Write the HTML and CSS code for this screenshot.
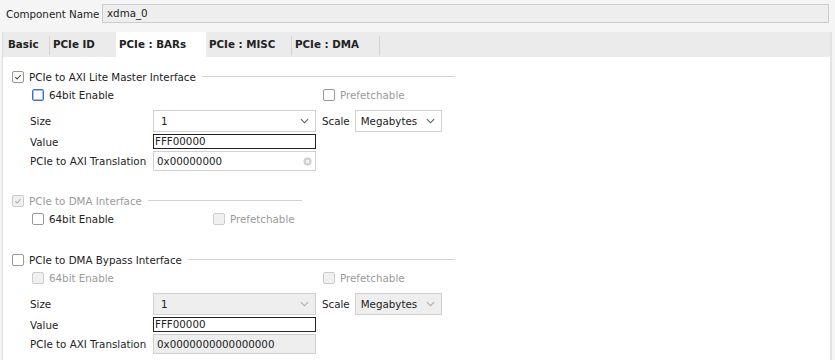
FILE: index.html
```html
<!DOCTYPE html>
<html lang="en">
<head>
    <meta charset="utf-8">
    <title>xdma_0</title>
    <link rel="stylesheet" href="styles.css">
</head>

<body>
    <header class="top">
        <span class="name-label">Component Name</span>
        <div class="name-input">xdma_0</div>
    </header>

    <div class="panel">
        <nav class="tabs">
            <div class="tab tab-basic">Basic</div>
            <div class="tab tab-id">PCIe ID</div>
            <div class="tab tab-bars valgt">PCIe : BARs</div>
            <div class="tab tab-misc">PCIe : MISC</div>
            <div class="tab tab-dma">PCIe : DMA</div>
        </nav>

        <main class="page">
            <!-- AXI lite master -->
            <section class="group group-wide">
                <div class="group-head">
                    <span class="check">
                        <svg viewBox="0 0 12 12"><path d="M2.8 6.2 L5 8.4 L9.3 3.6" /></svg>
                    </span>
                    <span class="group-title">PCIe to AXI Lite Master Interface</span>
                    <span class="rule"></span>
                </div>
                <div class="opts">
                    <div class="opt"><span class="check focus"></span>64bit Enable</div>
                    <div class="opt off"><span class="check"></span>Prefetchable</div>
                </div>
                <div class="form">
                    <span class="lbl">Size</span>
                    <div class="select">1<svg class="chev" viewBox="0 0 10 6"><path d="M1 1 L5 5 L9 1" /></svg></div>
                    <span class="lbl scale-lbl">Scale</span>
                    <div class="select scale">Megabytes<svg class="chev" viewBox="0 0 10 6"><path d="M1 1 L5 5 L9 1" /></svg></div>

                    <span class="lbl">Value</span>
                    <div class="value">FFF00000</div>
                    <span></span><span></span>

                    <span class="lbl">PCIe to AXI Translation</span>
                    <div class="text">0x00000000
                        <svg class="clear" viewBox="0 0 10 10">
                            <circle cx="5" cy="5" r="4.5" />
                            <path d="M3.3 3.3 L6.7 6.7 M6.7 3.3 L3.3 6.7" />
                        </svg>
                    </div>
                </div>
            </section>

            <!-- DMA -->
            <section class="group group-narrow">
                <div class="group-head off">
                    <span class="check dis">
                        <svg viewBox="0 0 12 12"><path d="M2.8 6.2 L5 8.4 L9.3 3.6" /></svg>
                    </span>
                    <span class="group-title">PCIe to DMA Interface</span>
                    <span class="rule"></span>
                </div>
                <div class="opts">
                    <div class="opt"><span class="check"></span>64bit Enable</div>
                    <div class="opt off"><span class="check dis"></span>Prefetchable</div>
                </div>
            </section>

            <!-- DMA bypass -->
            <section class="group group-wide bypass">
                <div class="group-head">
                    <span class="check"></span>
                    <span class="group-title">PCIe to DMA Bypass Interface</span>
                    <span class="rule"></span>
                </div>
                <div class="opts">
                    <div class="opt off"><span class="check dis"></span>64bit Enable</div>
                    <div class="opt off"><span class="check dis"></span>Prefetchable</div>
                </div>
                <div class="form">
                    <span class="lbl">Size</span>
                    <div class="select dis">1<svg class="chev" viewBox="0 0 10 6"><path d="M1 1 L5 5 L9 1" /></svg></div>
                    <span class="lbl scale-lbl">Scale</span>
                    <div class="select scale dis">Megabytes<svg class="chev" viewBox="0 0 10 6"><path d="M1 1 L5 5 L9 1" /></svg></div>

                    <span class="lbl">Value</span>
                    <div class="value">FFF00000</div>
                    <span></span><span></span>

                    <span class="lbl">PCIe to AXI Translation</span>
                    <div class="text dis">0x0000000000000000</div>
                </div>
            </section>
        </main>
    </div>
</body>
</html>
```

FILE: styles.css
```css
* {
    box-sizing: border-box;
}

body {
    margin: 0;
    height: 360px;
    overflow: hidden;
    background-color: #f5f5f5;
    font-family: "DejaVu Sans", sans-serif;
    font-size: 10.3px;
    color: #222;
}

.top {
    display: flex;
    align-items: center;
    height: 32px;
    padding: 0 6px 5px 6px;
}

.name-label {
    width: 96px;
}

.name-input {
    width: 727px;
    height: 19px;
    line-height: 17px;
    padding-left: 4px;
    background-color: #eeeeee;
    border: 1px solid #cccccc;
}

.panel {
    margin-left: 2px;
    width: 830px;
    height: 328px;
    border-left: 1px solid #dddddd;
    border-right: 2px solid #e3e3e3;
}

.tabs {
    display: flex;
    height: 25px;
    background-color: #ebebeb;
}

.tab {
    height: 25px;
    line-height: 25px;
    padding-left: 3px;
    font-weight: bold;
    background: linear-gradient(#d4d4d4, #d4d4d4) right 4px / 1px 19px no-repeat;
}

.tab-basic {
    width: 47px;
    padding-left: 5px;
}

.tab-id {
    width: 66px;
    background: none;
}

.tab-bars {
    width: 90px;
}

.tab-misc {
    width: 86px;
}

.tab-dma {
    width: 88px;
}

.valgt {
    background: #ffffff;
}

.page {
    height: 303px;
    padding: 10px 0 0 9px;
    background-color: #ffffff;
}

.group-wide {
    width: 443px;
}

.group-narrow {
    width: 290px;
    margin-top: 20px;
}

.bypass {
    margin-top: 22px;
}

.group-head {
    display: flex;
    align-items: center;
    height: 19px;
}

.group-title {
    margin-left: 5px;
}

.rule {
    flex: 1;
    height: 1px;
    margin-left: 6px;
    background-color: #d2d2d2;
}

.off {
    color: #9a9a9a;
}

.check {
    display: inline-block;
    flex: none;
    width: 12px;
    height: 12px;
    border: 1px solid #999999;
    border-radius: 2px;
    background-color: #ffffff;
}

.check svg {
    display: block;
    width: 10px;
    height: 10px;
    fill: none;
    stroke: #444444;
    stroke-width: 1.3;
}

.check.dis {
    border-color: #cccccc;
    background-color: #f0f0f0;
}

.check.dis svg {
    stroke: #aaaaaa;
}

.check.focus {
    border-color: #3d6fd1;
    box-shadow: inset 0 0 0 1px rgba(61, 111, 209, 0.45);
}

.opts {
    display: grid;
    grid-template-columns: 291px auto;
    height: 18px;
    padding-left: 20px;
    align-items: center;
}

.group-narrow .opts {
    grid-template-columns: 181px auto;
}

.opt {
    display: flex;
    align-items: center;
    gap: 5px;
}

.form {
    display: grid;
    grid-template-columns: 123px 163px max-content max-content;
    grid-template-rows: 22px 15px 20px;
    justify-content: start;
    row-gap: 2px;
    align-items: center;
    margin-top: 6px;
    padding-left: 18px;
}

.scale-lbl {
    margin: 0 5px 0 6px;
}

.select {
    display: flex;
    align-items: center;
    justify-content: space-between;
    height: 22px;
    padding: 0 6px 0 7px;
    background-color: #ffffff;
    border: 1px solid #d0d0d0;
}

.scale {
    width: 87px;
    padding-left: 5px;
}

.chev {
    width: 9px;
    height: 6px;
    fill: none;
    stroke: #555555;
    stroke-width: 1.2;
}

.select.dis {
    background-color: #eeeeee;
}

.select.dis .chev {
    stroke: #aaaaaa;
}

.value {
    height: 15px;
    line-height: 13px;
    padding-left: 1px;
    border: 1px solid #222222;
    background-color: #ffffff;
}

.text {
    display: flex;
    align-items: center;
    justify-content: space-between;
    height: 20px;
    padding: 0 3px 0 3px;
    border: 1px solid #d0d0d0;
    background-color: #ffffff;
}

.text.dis {
    background-color: #eeeeee;
}

.clear {
    width: 9px;
    height: 9px;
}

.clear circle {
    fill: #cfcfcf;
}

.clear path {
    stroke: #ffffff;
    stroke-width: 1.2;
}
```
